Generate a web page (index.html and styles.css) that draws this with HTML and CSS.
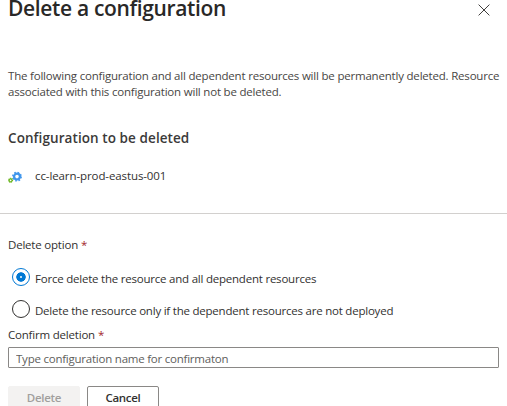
FILE: index.html
```html
<!DOCTYPE html>
<html lang="en">
<head>
<meta charset="utf-8">
<title>Delete a configuration</title>
<link rel="stylesheet" href="styles.css">
</head>
<body>
<main class="panel">
  <header class="header">
    <h1 class="title"><span>Delete a configuration</span></h1>
    <svg class="close" viewBox="0 0 12 12" role="img" aria-label="Close"><path d="M.6.6l10.8 10.8M11.4.6L.6 11.4"/></svg>
  </header>
  <p class="intro">The following configuration and all dependent resources will be permanently deleted. Resource<br>associated with this configuration will not be deleted.</p>
  <h2 class="section">Configuration to be deleted</h2>
  <div class="resource">
    <svg class="gears" viewBox="0 0 14 12" aria-hidden="true">
      <circle class="gear-teeth" cx="9" cy="5.6" r="4.1"/>
      <circle class="gear-ring" cx="9" cy="5.6" r="2.9"/>
      <circle class="small-teeth" cx="2.6" cy="9.3" r="2"/>
      <circle class="small-ring" cx="2.6" cy="9.3" r="1.5"/>
    </svg>
    <span class="resource-name">cc-learn-prod-eastus-001</span>
  </div>
  <form class="form">
    <div class="label"><span>Delete option</span><span class="star">*</span></div>
    <label class="choice"><input class="radio" type="radio" name="mode" checked><span class="choice-text">Force delete the resource and all dependent resources</span></label>
    <label class="choice"><input class="radio" type="radio" name="mode"><span class="choice-text">Delete the resource only if the dependent resources are not deployed</span></label>
    <label class="label label-confirm" for="confirm"><span>Confirm deletion</span><span class="star">*</span></label>
    <input class="field" id="confirm" type="text" placeholder="Type configuration name for confirmaton">
    <div class="actions">
      <button class="button" type="button" disabled>Delete</button>
      <button class="button" type="button">Cancel</button>
    </div>
  </form>
</main>
</body>
</html>
```
FILE: styles.css
```css
* { box-sizing: border-box; }
html { overflow: hidden; }
body {
  margin: 0;
  height: 406px;
  overflow: hidden;
  background: #fff;
  color: #323130;
  font: 11.5px/16px "Open Sans", "Noto Sans", sans-serif;
  letter-spacing: -0.2px;
}
h1, h2, p { margin: 0; white-space: nowrap; }
.header {
  display: flex;
  justify-content: space-between;
  height: 68px;
  padding: 0 17.5px 0 8px;
}
.title {
  margin-top: -6px;
  font-size: 21px;
  line-height: 28px;
  font-weight: 600;
  letter-spacing: -0.34px;
  color: #292827;
}
.close {
  width: 12px;
  height: 12px;
  margin-top: 3.5px;
  fill: none;
  stroke: #403f3e;
  stroke-width: 1;
}
.intro { padding-left: 8px; color: #484644; }
.section {
  margin-top: 28px;
  padding-left: 8px;
  font-size: 13.5px;
  line-height: 20px;
  font-weight: 600;
  letter-spacing: 0.08px;
  color: #3b3a39;
}
.resource {
  display: flex;
  height: 66px;
  padding: 20px 0 0 8px;
  border-bottom: 1px solid #d2d0ce;
  letter-spacing: -0.1px;
  white-space: nowrap;
}
.gears { width: 14px; height: 12px; margin: 3px 13px 0 0; fill: none; }
.gear-teeth { stroke: #4a9df0; stroke-width: 1.8; stroke-dasharray: 1.61 1.61; }
.gear-ring { stroke: #3f95ea; stroke-width: 2.2; }
.small-teeth { stroke: #6bb51e; stroke-width: 1.1; stroke-dasharray: .79 .79; }
.small-ring { stroke: #6bb51e; stroke-width: 1.3; }
.form { padding: 23px 8px 0; }
.label { display: flex; gap: 3px; height: 16px; }
.star { color: #a4262c; }
.choice {
  display: flex;
  align-items: center;
  gap: 5px;
  height: 32px;
  padding-left: 4px;
  white-space: nowrap;
}
.choice-text { padding-top: 4px; letter-spacing: -0.22px; }
.label + .choice { margin-top: 8px; }
.radio {
  appearance: none;
  flex: none;
  width: 18px;
  height: 18px;
  margin: 0;
  border: 1px solid #323130;
  border-radius: 50%;
}
.radio:checked {
  border-color: #0078d4;
  background: radial-gradient(circle, #fff 0 .6px, #0078d4 1px 4.4px, transparent 5px);
}
.label-confirm { margin-top: 2px; }
.field {
  display: block;
  width: 491px;
  height: 21px;
  margin: 4px 0 0;
  padding: 2px 7px 0;
  border: 1px solid #8a8886;
  border-radius: 1px;
  font: inherit;
  letter-spacing: -0.23px;
}
.field::placeholder { color: #605e5c; opacity: 1; }
.actions { display: flex; gap: 7px; margin-top: 18px; }
.button {
  width: 72px;
  height: 24px;
  padding: 0;
  border: 1px solid #8a8886;
  border-radius: 2px;
  background: #fff;
  color: #323130;
  font: 600 11.5px/16px "Open Sans", sans-serif;
  letter-spacing: -0.3px;
}
.button:disabled { border-color: #f3f2f1; background: #f3f2f1; color: #a19f9d; }
```
